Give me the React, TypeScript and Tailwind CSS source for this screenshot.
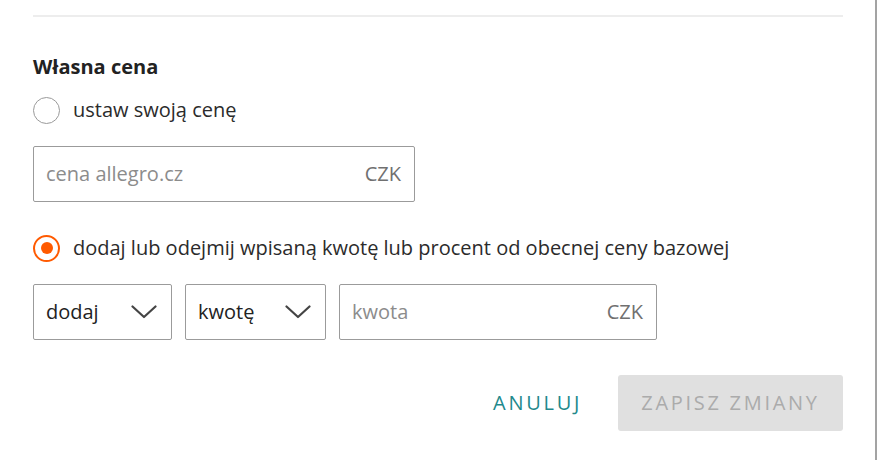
import { useState } from "react";

const font = { fontFamily: '"Open Sans", "Noto Sans", sans-serif' };

type RadioProps = {
  checked: boolean;
  label: string;
  onSelect: () => void;
};

const Radio = ({ checked, label, onSelect }: RadioProps) => (
  <button
    type="button"
    onClick={onSelect}
    className="flex h-[28px] items-center gap-[13px] text-left"
  >
    <span
      className={`flex h-[27px] w-[27px] shrink-0 items-center justify-center rounded-full ${
        checked ? "border-2 border-[#ff5a00]" : "border-[1.5px] border-[#9a9a9a]"
      }`}
    >
      {checked ? <span className="h-[12px] w-[12px] rounded-full bg-[#ff5a00]" /> : null}
    </span>
    <span className="text-[20px] leading-6 text-[#2b2b2b]">{label}</span>
  </button>
);

const Chevron = () => (
  <svg width="26" height="14" viewBox="0 0 26 14" fill="none" className="shrink-0">
    <path d="M1.5 1.5 L13 12 L24.5 1.5" stroke="#444" strokeWidth="2.2" strokeLinecap="round" strokeLinejoin="round" />
  </svg>
);

const SelectBox = ({ value, width }: { value: string; width: string }) => (
  <div
    className={`flex h-[56px] ${width} items-center justify-between rounded-[2px] border border-[#9b9b9b] pl-[12px] pr-[14px]`}
  >
    <span className="text-[20px] text-[#222]">{value}</span>
    <Chevron />
  </div>
);

const PriceInput = ({ placeholder, width }: { placeholder: string; width: string }) => (
  <div
    className={`flex h-[56px] ${width} items-center justify-between rounded-[2px] border border-[#9b9b9b] pl-[12px] pr-[13px]`}
  >
    <input
      placeholder={placeholder}
      className="min-w-0 flex-1 bg-transparent text-[20px] text-[#222] outline-none placeholder:text-[#8c8c8c]"
      style={font}
    />
    <span className="text-[20px] text-[#707070]">CZK</span>
  </div>
);

export default function App() {
  const [mode, setMode] = useState<"own" | "adjust">("adjust");

  return (
    <div className="flex h-[460px] w-[880px] overflow-hidden bg-white" style={font}>
      <section className="flex w-[877px] flex-col border-r-2 border-[#a3a3a3] pl-[33px] pr-[32px] pt-[15px]">
        <div className="h-[2px] w-full bg-[#ededed]" />

        <h2 className="mt-[38px] text-[20px] font-bold leading-6 text-[#222]">Własna cena</h2>

        <div className="mt-[17px]">
          <Radio checked={mode === "own"} label="ustaw swoją cenę" onSelect={() => setMode("own")} />
        </div>

        <div className="mt-[22px]">
          <PriceInput placeholder="cena allegro.cz" width="w-[382px]" />
        </div>

        <div className="mt-[32px]">
          <Radio
            checked={mode === "adjust"}
            label="dodaj lub odejmij wpisaną kwotę lub procent od obecnej ceny bazowej"
            onSelect={() => setMode("adjust")}
          />
        </div>

        <div className="mt-[22px] flex gap-[13px]">
          <SelectBox value="dodaj" width="w-[139px]" />
          <SelectBox value="kwotę" width="w-[141px]" />
          <PriceInput placeholder="kwota" width="w-[318px]" />
        </div>

        <div className="mt-[35px] flex items-center justify-end gap-[24px]">
          <button
            type="button"
            className="px-[12px] text-[20px] uppercase tracking-[2.7px] text-[#22898c]"
          >
            Anuluj
          </button>
          <button
            type="button"
            disabled
            className="h-[56px] w-[225px] rounded-[3px] bg-[#e0e0e0] text-[20px] uppercase tracking-[2.7px] text-[#ababab]"
          >
            Zapisz zmiany
          </button>
        </div>
      </section>
    </div>
  );
}
